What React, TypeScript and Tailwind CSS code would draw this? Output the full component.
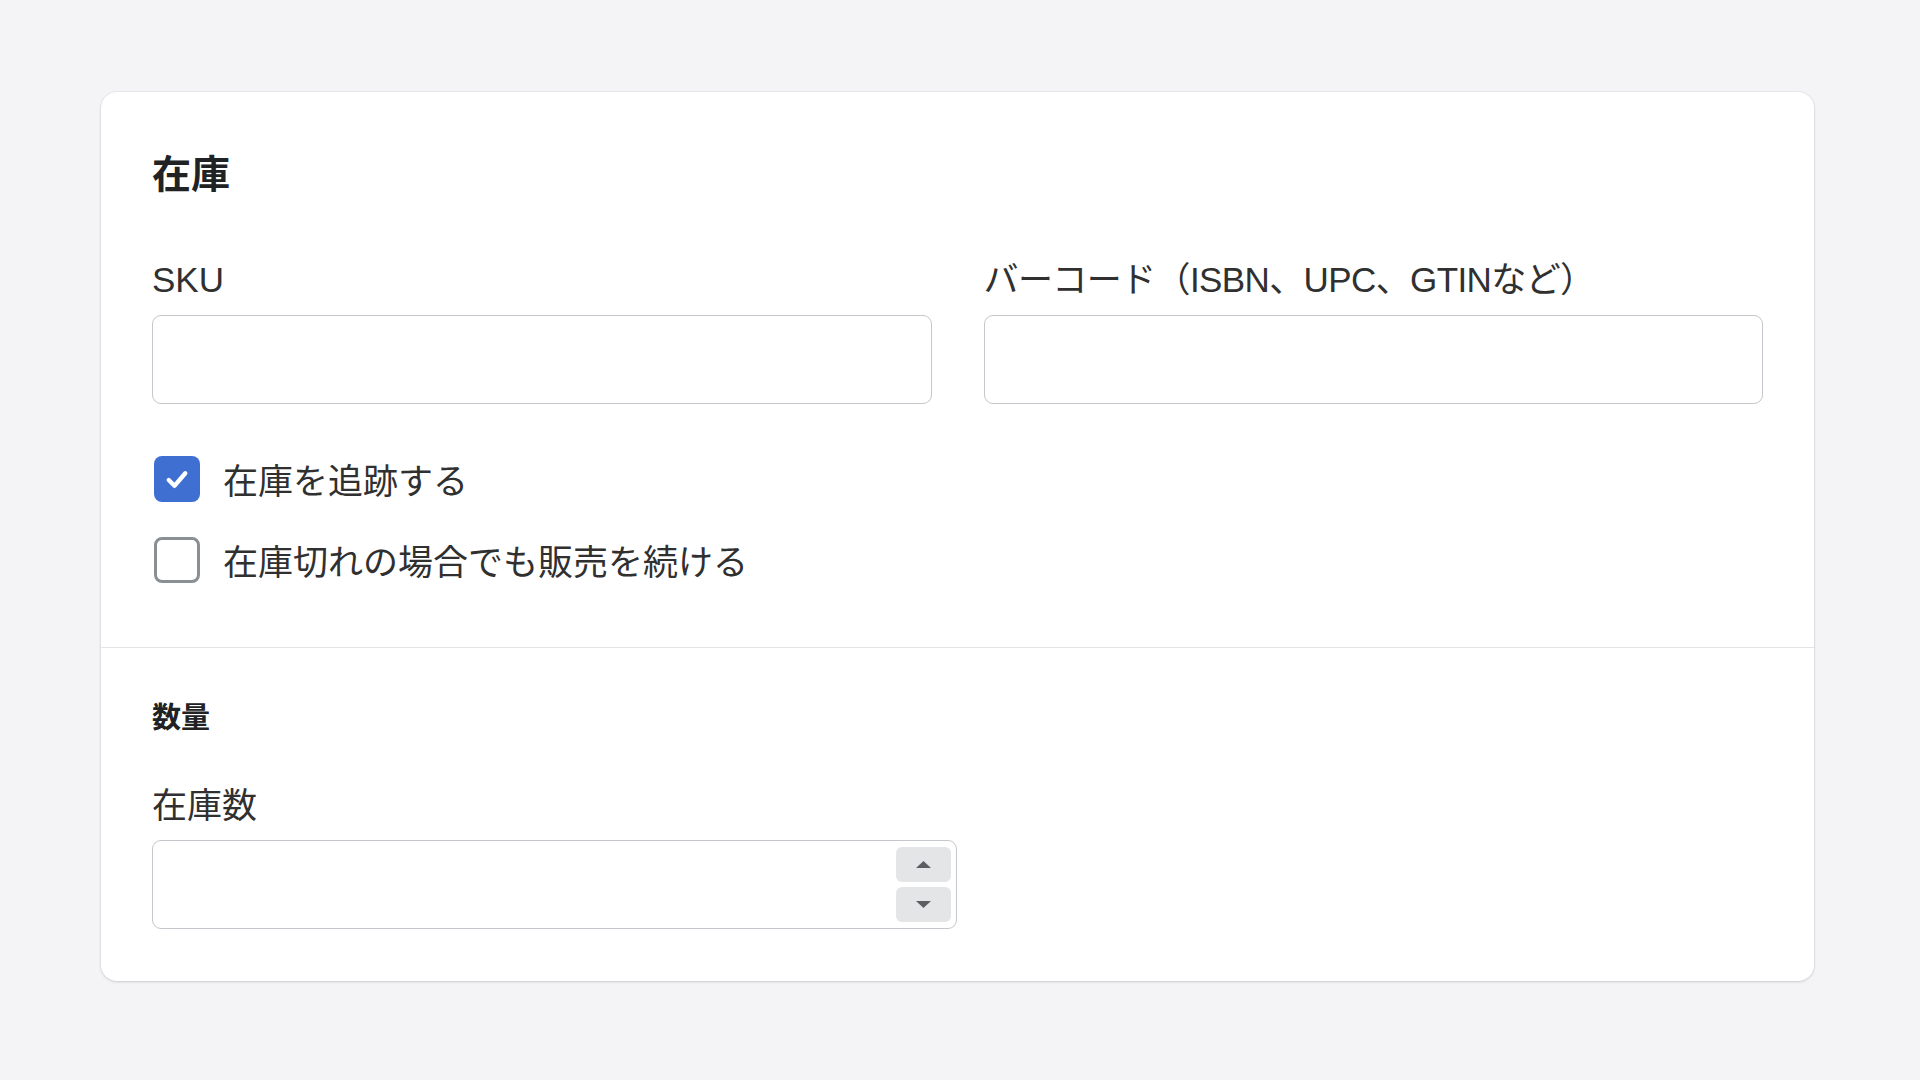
import { useState } from 'react';

function Checkbox({ checked, label, onToggle }: { checked: boolean; label: string; onToggle: () => void }) {
  return (
    <label className="flex h-[50px] cursor-pointer items-center gap-[23px]" onClick={onToggle}>
      {checked ? (
        <span className="ml-[2px] flex h-[46px] w-[46px] items-center justify-center rounded-[8px] bg-[#3e6fd1]">
          <svg viewBox="0 0 20 20" className="h-[36px] w-[36px]" fill="none">
            <path d="M5.4 10.6 L8.6 13.8 L14.6 6.8" stroke="#ffffff" strokeWidth="2.4" strokeLinecap="round" strokeLinejoin="round" />
          </svg>
        </span>
      ) : (
        <span className="ml-[2px] h-[46px] w-[46px] rounded-[8px] border-[3px] border-[#8a8f94] bg-white" />
      )}
      <span className="pt-[5px] text-[35px] leading-[48px] text-[#303030]">{label}</span>
    </label>
  );
}

export default function App() {
  const [track, setTrack] = useState(true);
  const [oversell, setOversell] = useState(false);
  const [qty, setQty] = useState('');

  const step = (d: number) => {
    const n = parseInt(qty || '0') + d;
    setQty(String(n));
  };

  return (
    <div className="min-h-screen bg-[#f4f4f6] pt-[92px] font-['Liberation_Sans','Noto_Sans_CJK_JP',sans-serif]">
      <div className="ml-[101px] w-[1713px] rounded-[16px] bg-white shadow-[0_1px_3px_rgba(0,0,0,0.14),0_0_0_1px_rgba(0,0,0,0.03)]">
        {/* 在庫 */}
        <div className="px-[51px] pt-[52px] pb-[62px]">
          <h2 className="pt-[3px] text-[39px] font-bold leading-[56px] text-[#202223]">在庫</h2>

          <div className="mt-[53px] grid grid-cols-2 gap-x-[52px]">
            <div>
              <label className="mb-[11px] block text-[35px] leading-[48px] text-[#303030]">SKU</label>
              <input className="h-[89px] w-full rounded-[9px] border-[1.5px] border-[#c4c7cb] bg-white px-5 text-[35px] outline-none" />
            </div>
            <div>
              <label className="mb-[11px] block text-[35px] leading-[48px] tracking-[-0.6px] text-[#303030]">
                バーコード（ISBN、UPC、GTINなど）
              </label>
              <input className="h-[89px] w-full rounded-[9px] border-[1.5px] border-[#c4c7cb] bg-white px-5 text-[35px] outline-none" />
            </div>
          </div>

          <div className="mt-[50px] flex flex-col gap-[31px]">
            <Checkbox checked={track} label="在庫を追跡する" onToggle={() => setTrack(!track)} />
            <Checkbox checked={oversell} label="在庫切れの場合でも販売を続ける" onToggle={() => setOversell(!oversell)} />
          </div>
        </div>

        {/* 数量 */}
        <div className="border-t border-[#e3e4e6] px-[51px] pt-[50px] pb-[52px]">
          <h3 className="text-[29px] font-bold leading-[40px] text-[#202223]">数量</h3>
          <label className="mt-[42px] mb-[10px] block pt-[2px] text-[35px] leading-[48px] text-[#303030]">在庫数</label>
          <div className="flex h-[89px] w-[805px] items-center rounded-[9px] border-[1.5px] border-[#c4c7cb] bg-white pr-[5px]">
            <input
              value={qty}
              onChange={(e) => setQty(e.target.value)}
              className="h-full min-w-0 flex-1 rounded-[9px] bg-transparent px-5 text-[35px] outline-none"
            />
            <div className="flex w-[55px] flex-col gap-[5px]">
              <button onClick={() => step(1)} className="flex h-[35px] items-center justify-center rounded-[6px] bg-[#e4e5e7]">
                <svg viewBox="0 0 15 7" className="h-[7px] w-[15px]">
                  <polygon points="7.5,0 15,7 0,7" fill="#5c5f62" />
                </svg>
              </button>
              <button onClick={() => step(-1)} className="flex h-[35px] items-center justify-center rounded-[6px] bg-[#e4e5e7]">
                <svg viewBox="0 0 15 7" className="h-[7px] w-[15px]">
                  <polygon points="0,0 15,0 7.5,7" fill="#5c5f62" />
                </svg>
              </button>
            </div>
          </div>
        </div>
      </div>
    </div>
  );
}
